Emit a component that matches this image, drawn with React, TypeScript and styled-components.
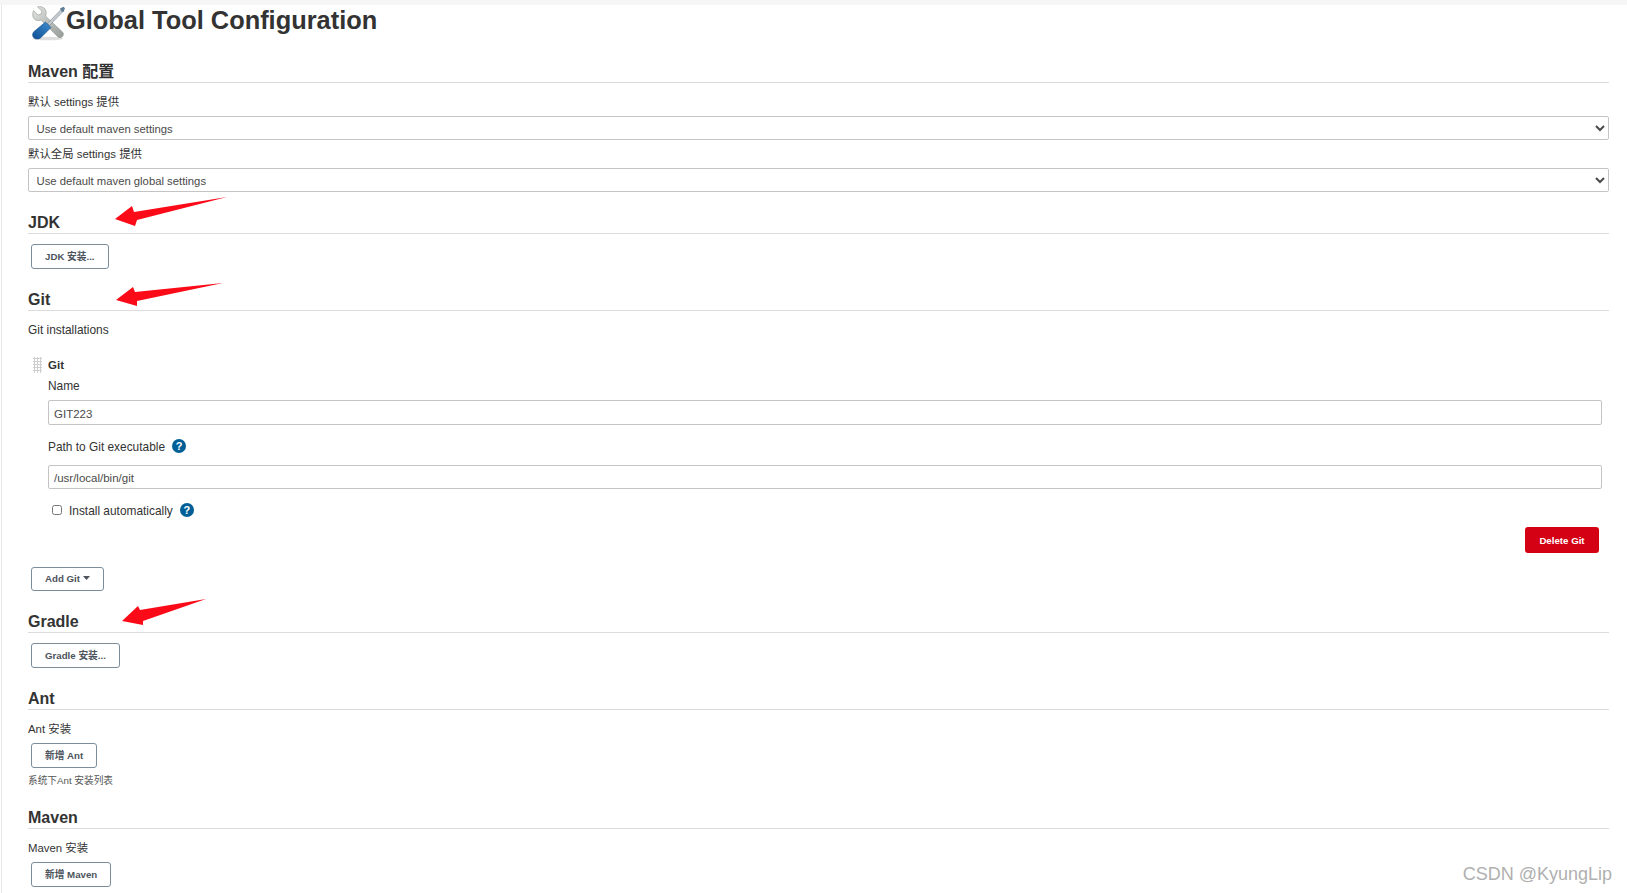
import React from 'react';
import styled, { createGlobalStyle } from 'styled-components';

const GlobalStyle = createGlobalStyle`
    html, body {
        margin: 0;
        height: 893px;
        overflow: hidden;
        background: #fff;
    }
    body {
        font-family: "Liberation Sans", "Noto Sans CJK SC", sans-serif;
        color: #333;
    }
`

const ToolsIcon = () => (
    <TitleIcon viewBox="0 0 36 36">
        <defs>
            <linearGradient id="steel" x1="0" y1="0" x2="1" y2="1">
                <stop offset="0" stopColor="#e2e4e2" />
                <stop offset="1" stopColor="#969b97" />
            </linearGradient>
            <linearGradient id="handle" x1="0" y1="1" x2="1" y2="0">
                <stop offset="0" stopColor="#0f4f94" />
                <stop offset="1" stopColor="#3f8fd0" />
            </linearGradient>
        </defs>
        <ellipse cx="18" cy="33.5" rx="15" ry="1.8" fill="#dedede" />
        <path
            d="M3.5 5.5 L8 10 L11 9 L12 6 L7.5 2 C11 0.8 15 2.5 16 6 C16.5 8 16.2 9.5 15.5 11 L32.5 27 C34 28.5 33.5 30.5 32.5 31.5 C31 33 29 33 27.8 31.8 L11 15 C8.5 16 5.5 15.7 3.8 13.5 C2.2 11.5 2.5 8 3.5 5.5 Z"
            fill="url(#steel)"
            stroke="#868b87"
            strokeWidth="0.5"
        />
        <path d="M31 4.5 L17.5 18.5 L19.5 20.5 L33 6.5 Z" fill="#c4cbd0" stroke="#6f7a82" strokeWidth="0.5" />
        <path d="M30 3.5 L33.5 1.8 L35 3.2 L33.5 7 L31.5 6.5 Z" fill="#5f7f98" />
        <path
            d="M15.5 17 L21 22.5 L11 32.5 C9 34.5 5.5 34.5 3.8 32.8 C2 31 2.2 28.5 4 26.5 Z"
            fill="url(#handle)"
            stroke="#0c427c"
            strokeWidth="0.5"
        />
    </TitleIcon>
)

const DropdownCaret = () => (
    <Caret viewBox="0 0 7 4">
        <path d="M0 0 H7 L3.5 4 Z" fill="currentColor" />
    </Caret>
)

const App = () => {
    return (
        <Page>
            <GlobalStyle />
            <TopStrip />
            <Main>
                <TitleRow>
                    <ToolsIcon />
                    <Title>Global Tool Configuration</Title>
                </TitleRow>

                <Heading $top={19}>Maven 配置</Heading>
                <CjkLabel $top={10}>默认 settings 提供</CjkLabel>
                <Select $top={7} $height={24} defaultValue="a">
                    <option value="a">Use default maven settings</option>
                </Select>
                <CjkLabel $top={5}>默认全局 settings 提供</CjkLabel>
                <Select $top={7} $height={24} defaultValue="a">
                    <option value="a">Use default maven global settings</option>
                </Select>

                <Heading $top={19}>JDK</Heading>
                <Button $top={10} $height={25}>JDK 安装...</Button>

                <Heading $top={19}>Git</Heading>
                <Label $top={10}>Git installations</Label>
                <RepeatBlock>
                    <Grip />
                    <RepeatBody>
                        <RepeatTitle>Git</RepeatTitle>
                        <Label $top={5}>Name</Label>
                        <TextInput $top={7} $height={25} defaultValue="GIT223" />
                        <LabelRow $top={13}>
                            <Label>Path to Git executable</Label>
                            <HelpIcon>?</HelpIcon>
                        </LabelRow>
                        <TextInput $top={11} $height={24} defaultValue="/usr/local/bin/git" />
                        <CheckRow>
                            <Check type="checkbox" />
                            <Label>Install automatically</Label>
                            <HelpIcon>?</HelpIcon>
                        </CheckRow>
                        <DeleteRow>
                            <DeleteButton>Delete Git</DeleteButton>
                        </DeleteRow>
                    </RepeatBody>
                </RepeatBlock>
                <Button $top={14} $height={24}>
                    Add Git
                    <DropdownCaret />
                </Button>

                <Heading $top={19}>Gradle</Heading>
                <Button $top={10} $height={25}>Gradle 安装...</Button>

                <Heading $top={19}>Ant</Heading>
                <CjkLabel $top={10}>Ant 安装</CjkLabel>
                <Button $top={7} $height={25}>新增 Ant</Button>
                <Hint>系统下Ant 安装列表</Hint>

                <Heading $top={18}>Maven</Heading>
                <CjkLabel $top={10}>Maven 安装</CjkLabel>
                <Button $top={7} $height={25}>新增 Maven</Button>
            </Main>

            <ArrowLayer viewBox="0 0 1627 893">
                <polygon points="115,219 132,206 134,212 227,197 137,220 135,226" />
                <polygon points="116,300 133,287 135,292 223,283 137,301 137,306" />
                <polygon points="122,621 138,606 140,610 206,599 143,621 143,625" />
            </ArrowLayer>
            <Watermark>CSDN @KyungLip</Watermark>
        </Page>
    )
}

const Page = styled.div`
    position: relative;
    width: 1627px;
    height: 893px;
    overflow: hidden;
`

const TopStrip = styled.div`
    height: 5px;
    background: #f6f6f6;
`

const Main = styled.div`
    display: flex;
    flex-direction: column;
    align-items: flex-start;
    height: 888px;
    margin-left: 1px;
    padding: 0 18px 0 26px;
    border-left: 1px solid #e8e8e8;
`

const TitleRow = styled.div`
    display: flex;
    align-items: flex-start;
    height: 36px;
    margin-left: 2px;
`

const TitleIcon = styled.svg`
    width: 36px;
    height: 36px;
    flex: none;
`

const Title = styled.h1`
    margin: 0;
    font-size: 25.4px;
    line-height: 30px;
    font-weight: 700;
    color: #333;
`

const Heading = styled.h2<{ $top: number }>`
    box-sizing: border-box;
    align-self: stretch;
    height: 23px;
    margin: ${p => p.$top}px 0 0;
    font-size: 16px;
    line-height: 23px;
    font-weight: 700;
    color: #333;
    border-bottom: 1px solid #dcdcdc;
`

const Label = styled.div<{ $top?: number }>`
    height: 16px;
    margin-top: ${p => p.$top ?? 0}px;
    font-size: 11.9px;
    line-height: 18px;
    color: #333;
`

const CjkLabel = styled(Label)`
    font-size: 11.4px;
`

const Hint = styled.div`
    height: 16px;
    margin-top: 4px;
    font-size: 9.7px;
    line-height: 18px;
    color: #555;
`

const fieldStyles = `
    box-sizing: border-box;
    align-self: stretch;
    border: 1px solid #c4c4c4;
    border-radius: 2px;
    background: #fff;
    color: #4a4a4a;
    font-family: "Liberation Sans", "Noto Sans CJK SC", sans-serif;
    outline: none;
`

const Select = styled.select<{ $top: number; $height: number }>`
    ${fieldStyles}
    height: ${p => p.$height}px;
    margin-top: ${p => p.$top}px;
    padding: 2px 3.5px 0;
    font-size: 11.3px;
`

const TextInput = styled.input<{ $top: number; $height: number }>`
    ${fieldStyles}
    height: ${p => p.$height}px;
    margin-top: ${p => p.$top}px;
    padding: 2px 5px 0;
    font-size: 11.5px;
`

const Button = styled.button<{ $top: number; $height: number }>`
    display: inline-flex;
    align-items: center;
    box-sizing: border-box;
    height: ${p => p.$height}px;
    margin: ${p => p.$top}px 0 0 3px;
    padding: 0 13px 2px;
    border: 1px solid #7b8d9b;
    border-radius: 3px;
    background: #fff;
    color: #4d545d;
    font-family: "Liberation Sans", "Noto Sans CJK SC", sans-serif;
    font-size: 9.7px;
    font-weight: 700;
`

const Caret = styled.svg`
    width: 7px;
    height: 4px;
    margin-left: 3px;
`

const RepeatBlock = styled.div`
    display: flex;
    align-self: stretch;
    margin-top: 19px;
    padding: 0 7px 0 5px;
`

const Grip = styled.div`
    flex: none;
    width: 9px;
    height: 16px;
    margin: 1px 6px 0 0;
    background-image: radial-gradient(circle at 1.5px 1.5px, #cfcfcf 1px, transparent 1.1px);
    background-size: 3px 3px;
`

const RepeatBody = styled.div`
    display: flex;
    flex: 1;
    flex-direction: column;
    align-items: flex-start;
`

const RepeatTitle = styled.div`
    height: 16px;
    font-size: 11.5px;
    line-height: 18px;
    font-weight: 700;
    color: #333;
`

const LabelRow = styled.div<{ $top: number }>`
    display: flex;
    align-items: center;
    height: 16px;
    margin-top: ${p => p.$top}px;
`

const HelpIcon = styled.span`
    display: inline-flex;
    align-items: center;
    justify-content: center;
    width: 14px;
    height: 14px;
    margin-left: 7px;
    border-radius: 50%;
    background: #005f96;
    color: #fff;
    font-size: 11px;
    font-weight: 700;
`

const CheckRow = styled.div`
    display: flex;
    align-items: center;
    height: 16px;
    margin-top: 13px;
`

const Check = styled.input`
    width: 10px;
    height: 10px;
    margin: 0 7px 0 4px;
`

const DeleteRow = styled.div`
    display: flex;
    justify-content: flex-end;
    align-self: stretch;
    margin-top: 9px;
    padding-right: 3px;
`

const DeleteButton = styled.button`
    box-sizing: border-box;
    width: 74px;
    height: 26px;
    padding: 0;
    border: none;
    border-radius: 3px;
    background: #d40014;
    color: #fff;
    font-family: "Liberation Sans", sans-serif;
    font-size: 9.7px;
    font-weight: 700;
`

const ArrowLayer = styled.svg`
    position: absolute;
    top: 0;
    left: 0;
    width: 1627px;
    height: 893px;
    pointer-events: none;

    polygon {
        fill: #fb0a18;
    }
`

const Watermark = styled.div`
    position: absolute;
    right: 15px;
    bottom: 7px;
    font-size: 18px;
    line-height: 24px;
    color: #b0b0b0;
`

export default App;
